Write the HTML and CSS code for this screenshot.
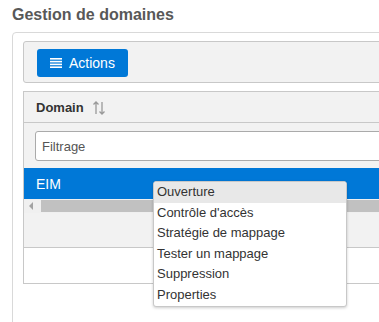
FILE: index.html
```html
<!DOCTYPE html>
<html lang="fr">
<head>
    <meta charset="UTF-8">
    <meta name="viewport" content="width=device-width, initial-scale=1.0">
    <title>Gestion de domaines</title>
    <link rel="stylesheet" href="styles.css">
</head>
<body>
    <h2 class="page-title">Gestion de domaines</h2>
    <div class="panel">
        <div class="toolbar">
            <button class="btn-actions">
                <svg width="12" height="10" viewBox="0 0 12 10">
                    <rect x="0" y="0" width="12" height="1.6" fill="#fff"/>
                    <rect x="0" y="2.8" width="12" height="1.6" fill="#fff"/>
                    <rect x="0" y="5.6" width="12" height="1.6" fill="#fff"/>
                    <rect x="0" y="8.4" width="12" height="1.6" fill="#fff"/>
                </svg>
                Actions
            </button>
        </div>
        <div class="grid">
            <div class="grid-header">
                Domain
                <svg class="sort-icon" width="14" height="14" viewBox="0 0 14 14">
                    <path d="M4 13V1M1.5 3.5L4 1l2.5 2.5" fill="none" stroke="#999" stroke-width="1.3"/>
                    <path d="M10 1v12M7.5 10.5L10 13l2.5-2.5" fill="none" stroke="#999" stroke-width="1.3"/>
                </svg>
            </div>
            <div class="grid-filter">
                <input type="text" placeholder="Filtrage">
            </div>
            <div class="grid-row selected">EIM</div>
            <div class="scrollbar">
                <span class="arrow-left"></span>
                <div class="thumb"></div>
            </div>
            <div class="grid-empty"></div>
            <div class="grid-footer"></div>
        </div>
    </div>

    <ul class="context-menu">
        <li class="active">Ouverture</li>
        <li>Contrôle d'accès</li>
        <li>Stratégie de mappage</li>
        <li>Tester un mappage</li>
        <li>Suppression</li>
        <li>Properties</li>
    </ul>
</body>
</html>
```

FILE: styles.css
```css
* {
    box-sizing: border-box;
    margin: 0;
    padding: 0;
}

body {
    font-family: "Liberation Sans", Arial, sans-serif;
    background-color: white;
    overflow: hidden;
    width: 379px;
    height: 322px;
    position: relative;
}

.page-title {
    font-size: 16px;
    font-weight: bold;
    color: #585858;
    padding: 6px 12px 0;
    height: 32px;
}

.panel {
    margin-left: 12px;
    margin-right: -30px;
    height: 310px;
    border: 1px solid #d9d9d9;
    border-radius: 4px;
    padding: 8px 10px;
}

.toolbar {
    background-color: #f2f2f2;
    border: 1px solid #c8c8c8;
    border-radius: 3px;
    padding: 7px 13px 5px;
    margin-bottom: 8px;
}

.btn-actions {
    display: flex;
    align-items: center;
    gap: 7px;
    height: 28px;
    padding: 0 13px;
    background-color: #0078d7;
    color: white;
    border: none;
    border-radius: 3px;
    font-family: inherit;
    font-size: 14px;
}

.grid {
    border: 1px solid #c8c8c8;
}

.grid-header {
    display: flex;
    align-items: center;
    gap: 8px;
    height: 31px;
    padding-left: 12px;
    background-color: #f2f2f2;
    border-bottom: 1px solid #c8c8c8;
    font-size: 13px;
    font-weight: bold;
    color: #333;
}

.sort-icon {
    margin-top: 1px;
}

.grid-filter {
    background-color: #f2f2f2;
    padding: 8px 11px 7px;
    height: 45px;
}

.grid-filter input {
    width: 100%;
    height: 30px;
    border: 1px solid #aaa;
    border-radius: 3px;
    padding: 0 6px;
    font-family: inherit;
    font-size: 13px;
    color: #333;
}

.grid-filter input::placeholder {
    color: #555;
}

.grid-row {
    height: 31px;
    display: flex;
    align-items: center;
    padding-left: 12px;
    font-size: 14px;
}

.grid-row.selected {
    background-color: #0078d7;
    color: white;
}

.scrollbar {
    display: flex;
    align-items: center;
    height: 14px;
    background-color: #f0f0f0;
    padding-left: 5px;
}

.arrow-left {
    width: 0;
    height: 0;
    border-top: 4px solid transparent;
    border-bottom: 4px solid transparent;
    border-right: 4px solid #a3a3a3;
    margin-right: 8px;
}

.thumb {
    flex: 1;
    height: 12px;
    background-color: #c1c1c1;
}

.grid-empty {
    height: 35px;
    background-color: #f2f2f2;
    border-bottom: 1px solid #c8c8c8;
}

.grid-footer {
    height: 35px;
    background-color: white;
}

.context-menu {
    position: absolute;
    left: 153px;
    top: 181px;
    width: 194px;
    list-style: none;
    background-color: white;
    border: 1px solid #c8c8c8;
    border-radius: 3px;
    box-shadow: 0 1px 3px rgba(0, 0, 0, 0.2);
    overflow: hidden;
}

.context-menu li {
    height: 20.6px;
    line-height: 20.6px;
    padding-left: 3px;
    font-size: 13px;
    color: #333;
}

.context-menu li.active {
    background-color: #e8e8e8;
}
```
